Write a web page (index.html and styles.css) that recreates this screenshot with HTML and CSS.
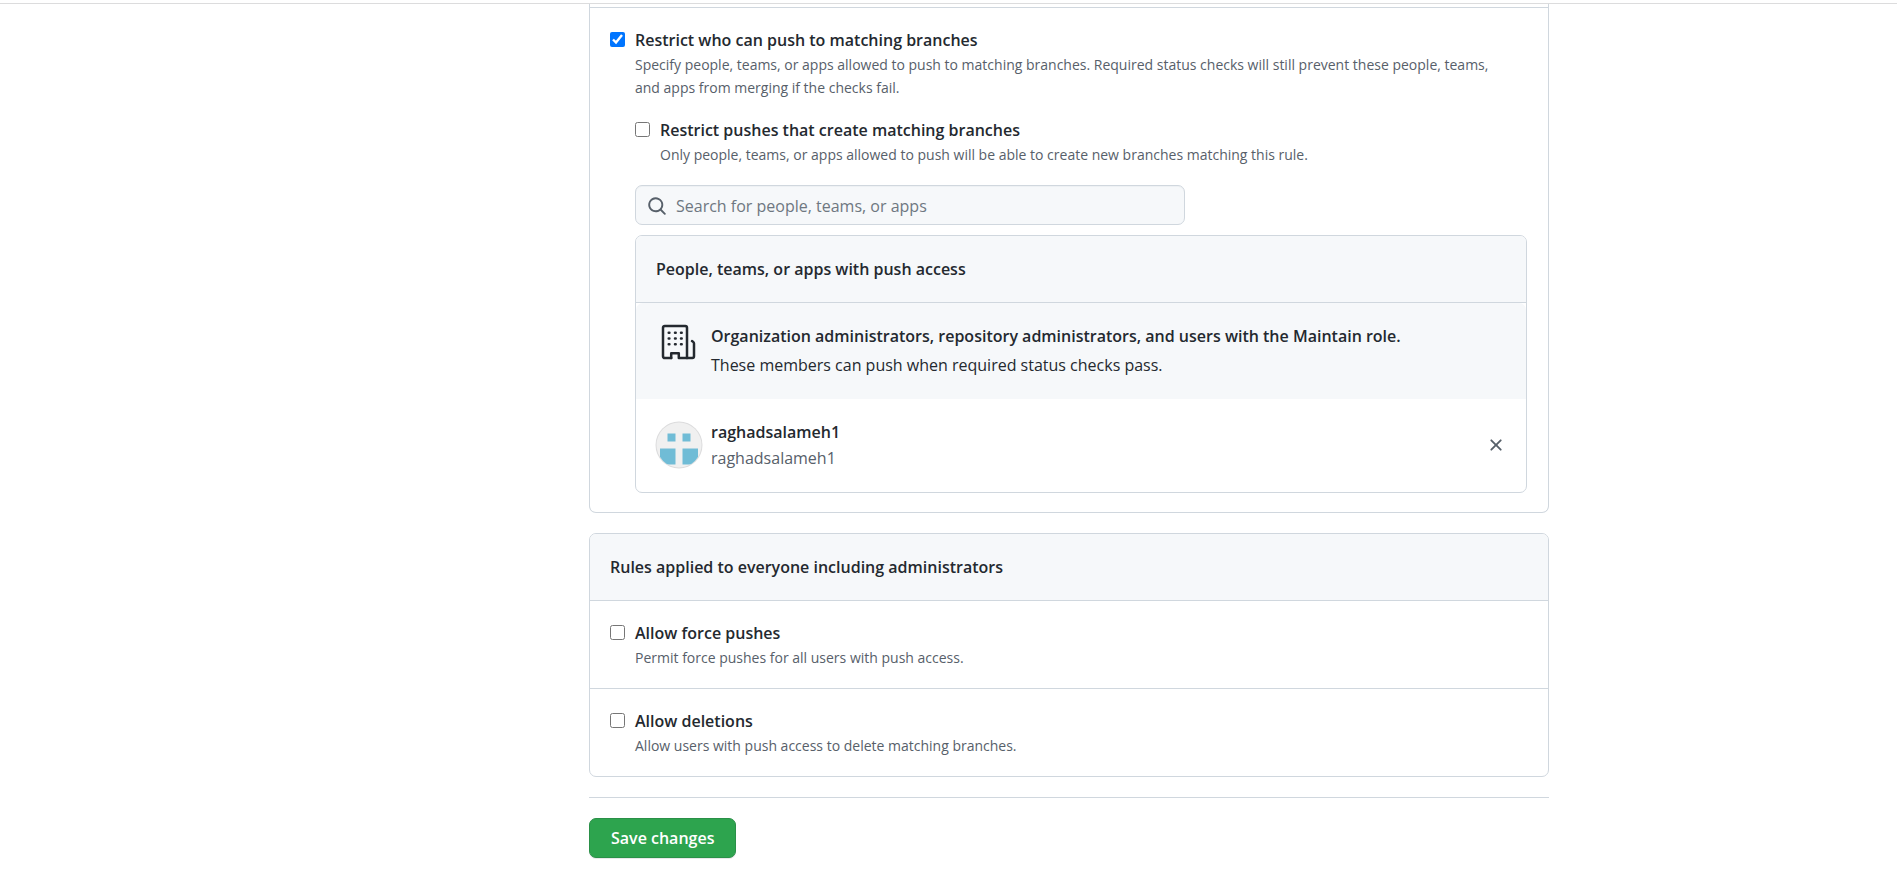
FILE: index.html
```html
<!DOCTYPE html>
<html lang="en">
<head>
<meta charset="utf-8">
<title>Branch protection rule</title>
<link rel="stylesheet" href="styles.css">
</head>
<body>
<header class="topbar"></header>
<div class="container">
  <form class="settings">
    <section class="card card-continued">
      <div class="rule rule-push">
        <input class="check" type="checkbox" id="restrict-push" checked>
        <div class="rule-body">
          <label class="rule-title" for="restrict-push">Restrict who can push to matching branches</label>
          <p class="note">Specify people, teams, or apps allowed to push to matching branches. Required status checks will still prevent these people, teams, and apps from merging if the checks fail.</p>
          <div class="rule subrule">
            <input class="check" type="checkbox" id="restrict-create">
            <div class="rule-body">
              <label class="rule-title" for="restrict-create">Restrict pushes that create matching branches</label>
              <p class="note">Only people, teams, or apps allowed to push will be able to create new branches matching this rule.</p>
            </div>
          </div>
          <label class="search">
            <svg class="search-icon" viewBox="0 0 16 16" aria-hidden="true"><path fill-rule="evenodd" d="M11.5 7a4.499 4.499 0 11-8.998 0A4.499 4.499 0 0111.5 7zm-.82 4.74a6 6 0 111.06-1.06l3.04 3.04a.75.75 0 11-1.06 1.06l-3.04-3.04z"/></svg>
            <input class="search-input" type="text" placeholder="Search for people, teams, or apps" aria-label="Search for people, teams, or apps">
          </label>
          <div class="access">
            <h2 class="access-header">People, teams, or apps with push access</h2>
            <div class="access-row access-org">
              <svg class="org-icon" viewBox="0 1 48 37" fill="none" stroke="#24292f" stroke-width="2.5" stroke-linecap="round" stroke-linejoin="round" aria-hidden="true"><path d="M16.200 36H9.700A1.700 1.700 0 0 1 8 34.300V5.700A1.700 1.700 0 0 1 9.700 4h20.600A1.700 1.700 0 0 1 32 5.700V36"/><path d="M16.200 36v-4.800h7.600V36h13.500a1.700 1.700 0 0 0 1.700-1.700V21.600a2.200 2.200 0 0 0-1-1.800l-1-.7"/><path d="M13.700 10.700h.7M20 10.700h.7M26 10.700h.7M13.700 16.500h.7M20 16.500h.7M26 16.500h.7M13.700 22.300h.7M20 22.300h.7M26 22.300h.7"/></svg>
              <div class="access-text">
                <strong class="access-name">Organization administrators, repository administrators, and users with the Maintain role.</strong>
                <span class="access-info">These members can push when required status checks pass.</span>
              </div>
            </div>
            <div class="access-row access-user">
              <svg class="avatar" viewBox="0 0 48 48" role="img" aria-label="raghadsalameh1 avatar"><defs><clipPath id="round"><circle cx="24" cy="24" r="22.500"/></clipPath></defs><circle cx="24" cy="24" r="23.500" fill="#dcdcdd"/><g clip-path="url(#round)"><path fill="#f0f0f0" d="M0 0h48v48H0z"/><path fill="#70bcd6" d="M12.500 12.500h8v8h-8zM27.500 12.500h8v8h-8zM5 27.500h15.500v16H5zM27.500 27.500H43v16H27.500z"/></g></svg>
              <div class="access-text">
                <strong class="access-name">raghadsalameh1</strong>
                <span class="access-login">raghadsalameh1</span>
              </div>
              <button class="remove" type="button" aria-label="Remove raghadsalameh1"><svg class="remove-icon" viewBox="0 0 16 16" aria-hidden="true"><path fill-rule="evenodd" d="M3.720 3.720a.75.75 0 011.060 0L8 6.940l3.220-3.220a.75.75 0 111.060 1.060L9.060 8l3.220 3.220a.75.75 0 11-1.060 1.060L8 9.060l-3.220 3.220a.75.75 0 01-1.060-1.060L6.940 8 3.720 4.780a.75.75 0 010-1.060z"/></svg></button>
            </div>
          </div>
        </div>
      </div>
    </section>

    <section class="card">
      <h2 class="card-header">Rules applied to everyone including administrators</h2>
      <div class="rule rule-row">
        <input class="check" type="checkbox" id="force-push">
        <div class="rule-body">
          <label class="rule-title" for="force-push">Allow force pushes</label>
          <p class="note">Permit force pushes for all users with push access.</p>
        </div>
      </div>
      <div class="rule rule-row">
        <input class="check" type="checkbox" id="deletions">
        <div class="rule-body">
          <label class="rule-title" for="deletions">Allow deletions</label>
          <p class="note">Allow users with push access to delete matching branches.</p>
        </div>
      </div>
    </section>

    <div class="actions">
      <button class="save" type="submit">Save changes</button>
    </div>
  </form>
</div>
</body>
</html>
```
FILE: styles.css
```css
* {
  box-sizing: border-box;
}

body {
  margin: 0;
  background: #fff;
  color: #24292f;
  font: 16px/26px "Segoe UI", "Open Sans", "Noto Sans", sans-serif;
}

h2,
p {
  margin: 0;
}

.topbar {
  height: 4px;
  border-bottom: 1px solid #dcdcdd;
}

.container {
  display: grid;
  grid-template-columns: 221px minmax(0, 1fr);
  column-gap: 20px;
  max-width: 1265px;
  margin: 0 auto;
  padding: 0 32px;
}

.settings {
  grid-column: 2;
}

.card {
  margin-bottom: 20px;
  border: 1px solid #d0d7de;
  border-radius: 7px;
}

.card-continued {
  padding-top: 3px;
  border-top: 0;
  border-radius: 0 0 7px 7px;
}

.card-header,
.access-header {
  padding: 20px;
  border-bottom: 1px solid #d0d7de;
  border-radius: 6px 6px 0 0;
  background: #f6f8fa;
  font-size: 16px;
  font-weight: 600;
}

.rule {
  display: flex;
  align-items: flex-start;
  gap: 10px;
}

.rule-push {
  padding: 20px 21px 19px 20px;
  border-top: 1px solid #d0d7de;
}

.rule-row {
  padding: 20px 20px 19px;
}

.rule-row + .rule-row {
  border-top: 1px solid #d0d7de;
}

.rule-body {
  flex: 1;
  min-width: 0;
}

.check {
  flex: none;
  width: 15px;
  height: 15px;
  margin: 4px 0 0;
}

.rule-title {
  display: block;
  width: fit-content;
  font-weight: 600;
  line-height: 25px;
}

.note {
  padding-right: 20px;
  color: #57606a;
  font-size: 14px;
  line-height: 23px;
}

.subrule {
  margin: 19px 0;
}

.search {
  display: flex;
  align-items: center;
  gap: 9px;
  width: 550px;
  max-width: 100%;
  height: 40px;
  margin-bottom: 10px;
  padding: 1px 11px 0;
  border: 1px solid #d0d7de;
  border-radius: 7px;
  background: #f6f8fa;
  box-shadow: inset 0 1px 0 rgba(208, 215, 222, 0.2);
}

.search-icon {
  flex: none;
  width: 20px;
  height: 20px;
  fill: #57606a;
}

.search-input {
  flex: 1;
  min-width: 0;
  padding: 0;
  border: 0;
  outline: 0;
  background: transparent;
  color: inherit;
  font: inherit;
}

.search-input::placeholder {
  color: #6e7781;
  opacity: 1;
}

.access {
  border: 1px solid #d0d7de;
  border-radius: 7px;
}

.access-row {
  display: flex;
  gap: 8px;
  padding: 20px 20px 21px 19px;
}

.access-org {
  border-radius: 7px 7px 0 0;
  background: #f6f8fa;
}

.access-org .access-text {
  gap: 3px;
}

.org-icon {
  flex: none;
  width: 48px;
  height: 37px;
}

.access-user {
  align-items: center;
}

.avatar {
  flex: none;
  width: 48px;
  height: 48px;
}

.access-text {
  display: flex;
  flex: 1;
  flex-direction: column;
  min-width: 0;
}

.access-name {
  font-weight: 600;
}

.access-login {
  color: #57606a;
}

.remove {
  display: flex;
  padding: 0;
  border: 0;
  background: none;
  cursor: pointer;
}

.remove-icon {
  width: 20px;
  height: 20px;
  fill: #57606a;
}

.actions {
  padding: 20px 0;
  border-top: 1px solid #d0d7de;
}

.save {
  height: 40px;
  padding: 0 21px;
  border: 1px solid #2a9048;
  border-radius: 7px;
  background: #2da44e;
  box-shadow: 0 1px 0 rgba(27, 31, 36, 0.1);
  color: #fff;
  font: inherit;
  font-weight: 600;
  cursor: pointer;
}
```
